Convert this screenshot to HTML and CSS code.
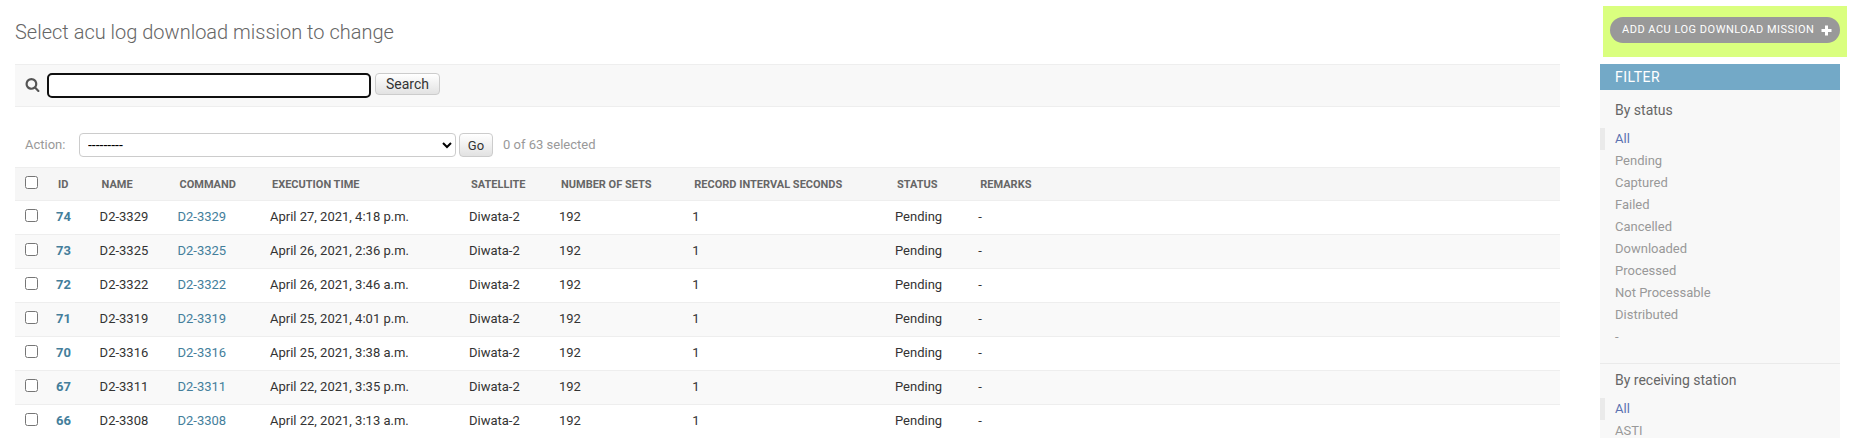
FILE: index.html
```html
<!DOCTYPE html>
<html lang="en">
<head>
<meta charset="utf-8">
<title>Select acu log download mission to change</title>
<link rel="stylesheet" href="styles.css">
</head>
<body>
<div class="page">
<main class="main">
<h1 class="title">Select acu log download mission to change</h1>
<form class="search">
<svg class="search-icon" width="15" height="15" viewBox="0 0 1792 1792"><path fill="#555" d="M1216 832q0-185-131.500-316.500t-316.500-131.500-316.500 131.500-131.500 316.500 131.500 316.500 316.500 131.500 316.500-131.500 131.500-316.500zm512 832q0 52-38 90t-90 38q-54 0-90-38l-343-342q-179 124-399 124-143 0-273.500-55.500t-225-150-150-225-55.500-273.500 55.500-273.500 150-225 225-150 273.500-55.500 273.500 55.500 225 150 150 225 55.500 273.500q0 220-124 399l343 343q37 37 37 90z"/></svg>
<input class="search-input" type="text" aria-label="Search">
<button class="button search-button" type="button">Search</button>
</form>
<div class="actions">
<label class="action-label" for="action">Action:</label>
<select class="action-select" id="action"><option>---------</option></select>
<button class="button go" type="button">Go</button>
<span class="counter">0 of 63 selected</span>
</div>
<table class="results">
<colgroup><col class="c-check"><col class="c-id"><col class="c-name"><col class="c-command"><col class="c-time"><col class="c-satellite"><col class="c-sets"><col class="c-interval"><col class="c-status"><col></colgroup>
<thead><tr><th class="check"><input type="checkbox"></th><th>ID</th><th>Name</th><th>Command</th><th>Execution time</th><th>Satellite</th><th>Number of sets</th><th>Record interval seconds</th><th>Status</th><th>Remarks</th></tr></thead>
<tbody>
<tr><td class="check"><input type="checkbox"></td><td><a class="id">74</a></td><td>D2-3329</td><td><a>D2-3329</a></td><td>April 27, 2021, 4:18 p.m.</td><td>Diwata-2</td><td>192</td><td>1</td><td>Pending</td><td>-</td></tr>
<tr><td class="check"><input type="checkbox"></td><td><a class="id">73</a></td><td>D2-3325</td><td><a>D2-3325</a></td><td>April 26, 2021, 2:36 p.m.</td><td>Diwata-2</td><td>192</td><td>1</td><td>Pending</td><td>-</td></tr>
<tr><td class="check"><input type="checkbox"></td><td><a class="id">72</a></td><td>D2-3322</td><td><a>D2-3322</a></td><td>April 26, 2021, 3:46 a.m.</td><td>Diwata-2</td><td>192</td><td>1</td><td>Pending</td><td>-</td></tr>
<tr><td class="check"><input type="checkbox"></td><td><a class="id">71</a></td><td>D2-3319</td><td><a>D2-3319</a></td><td>April 25, 2021, 4:01 p.m.</td><td>Diwata-2</td><td>192</td><td>1</td><td>Pending</td><td>-</td></tr>
<tr><td class="check"><input type="checkbox"></td><td><a class="id">70</a></td><td>D2-3316</td><td><a>D2-3316</a></td><td>April 25, 2021, 3:38 a.m.</td><td>Diwata-2</td><td>192</td><td>1</td><td>Pending</td><td>-</td></tr>
<tr><td class="check"><input type="checkbox"></td><td><a class="id">67</a></td><td>D2-3311</td><td><a>D2-3311</a></td><td>April 22, 2021, 3:35 p.m.</td><td>Diwata-2</td><td>192</td><td>1</td><td>Pending</td><td>-</td></tr>
<tr><td class="check"><input type="checkbox"></td><td><a class="id">66</a></td><td>D2-3308</td><td><a>D2-3308</a></td><td>April 22, 2021, 3:13 a.m.</td><td>Diwata-2</td><td>192</td><td>1</td><td>Pending</td><td>-</td></tr>
</tbody>
</table>
</main>
<aside class="side">
<div class="tools"><a class="add"><span>Add acu log download mission</span><svg width="11" height="11" viewBox="0 0 11 11"><path fill="#fff" d="M4 .5h3V4h3.500v3H7v3.500H4V7H.5V4H4z"/></svg></a></div>
<nav class="filter">
<h2>Filter</h2>
<h3>By status</h3>
<ul>
<li class="selected">All</li><li>Pending</li><li>Captured</li><li>Failed</li><li>Cancelled</li><li>Downloaded</li><li>Processed</li><li>Not Processable</li><li>Distributed</li><li>-</li>
</ul>
<h3>By receiving station</h3>
<ul><li class="selected">All</li><li>ASTI</li></ul>
</nav>
</aside>
</div>
</body>
</html>
```
FILE: styles.css
```css
* { box-sizing: border-box; }
body { margin: 0; height: 438px; overflow: hidden; background: #fff; color: #333; font: 13px Roboto, sans-serif; }
.page { display: flex; gap: 40px; height: 438px; padding: 0 25px 0 15px; overflow: hidden; }
.main { width: 1545px; flex: none; }
.title { margin: 0; height: 64px; padding-top: 20px; font-size: 20px; line-height: 24px; font-weight: 300; color: #666; }
.search { display: flex; align-items: flex-start; height: 43px; padding: 8px 10px; background: #f8f8f8; border: solid #eee; border-width: 1px 0; }
.search-icon { margin: 4px 7px 0 0; overflow: visible; }
.search-input { width: 324px; height: 25px; margin: 0 4px 0 0; border: 2px solid #101010; border-radius: 5px; background: #fff; outline: none; }
.button { padding: 0; border: 1px solid #ccc; border-radius: 4px; background: linear-gradient(#fff, #e2e2e2); color: #333; font-family: Roboto, sans-serif; }
.search-button { width: 65px; height: 22px; font-size: 14px; line-height: 20px; }
.actions { display: flex; align-items: center; height: 60px; padding: 18px 10px 2px; color: #999; }
.action-label { width: 54px; padding-bottom: 2px; }
.counter { padding-bottom: 2px; }
.action-select { width: 377px; height: 24px; padding: 0 0 0 4px; border: 1px solid #ccc; border-radius: 4px; background: #fff; color: #000; font: 14px Roboto, sans-serif; }
.go { width: 34px; height: 24px; margin: 0 10px 0 3px; padding-top: 1px; font-size: 13px; }
.results { width: 1545px; table-layout: fixed; border-collapse: separate; border-spacing: 0; }
.c-check { width: 33px; }
.c-id { width: 43.6px; }
.c-name { width: 77.9px; }
.c-command { width: 92.5px; }
.c-time { width: 199px; }
.c-satellite { width: 90px; }
.c-sets { width: 133.3px; }
.c-interval { width: 202.7px; }
.c-status { width: 83.3px; }
.results td { height: 34px; padding: 0 8px 2px; border-bottom: 1px solid #eee; line-height: 16px; }
.results th { height: 34px; padding: 1px 10px 0; background: #f6f6f6; border: solid #eee; border-width: 1px 0; color: #666; font-size: 11px; text-align: left; text-transform: uppercase; white-space: nowrap; }
.results tr:nth-child(even) td { background: #f9f9f9; }
.results .check { padding: 0 0 0 10px; vertical-align: top; }
.check input { display: block; width: 13px; height: 13px; margin: 8px 0 0; }
.results a { color: #447e9b; }
.id { font-weight: 700; }
.side { width: 240px; flex: none; }
.tools { width: 244px; height: 51px; margin: 6px 0 7px 3px; padding: 11px 7px; background: #daff7f; }
.add { display: flex; align-items: center; justify-content: space-between; height: 26px; padding: 0 8px 0 12px; border-radius: 13px; background: #999; color: #fff; font-size: 11px; letter-spacing: .5px; text-transform: uppercase; white-space: nowrap; }
.add span { padding-bottom: 2px; }
.filter { height: 400px; background: #f8f8f8; }
.filter h2 { margin: 0; height: 26px; padding-left: 15px; background: #73a9c7; color: #fff; font-size: 14px; line-height: 26px; font-weight: 400; letter-spacing: .5px; text-transform: uppercase; }
.filter h3 { margin: 0; height: 38px; padding: 12px 15px 0; color: #666; font-size: 14px; line-height: 16px; font-weight: 400; }
.filter ul { margin: 0; padding: 0 0 15px; list-style: none; border-bottom: 1px solid #eaeaea; }
.filter ul + h3 { height: 34px; padding-top: 8px; }
.filter li { height: 22px; padding-left: 15px; color: #999; line-height: 22px; }
.filter .selected { padding-left: 10px; border-left: 5px solid #eaeaea; color: #5b72b2; }
```
